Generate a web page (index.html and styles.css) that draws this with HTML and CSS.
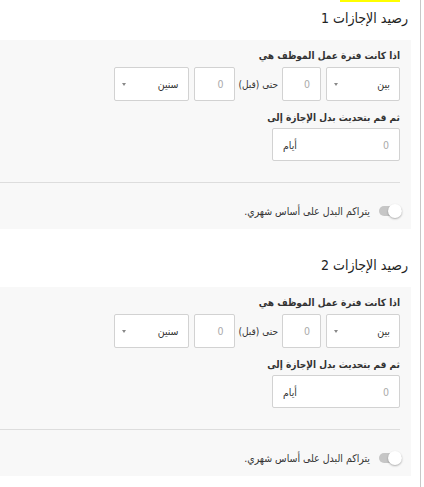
FILE: index.html
```html
<!DOCTYPE html>
<html lang="ar" dir="rtl">
<head>
  <meta charset="UTF-8">
  <meta name="viewport" content="width=device-width, initial-scale=1.0">
  <title>رصيد الإجازات</title>
  <link rel="stylesheet" href="styles.css">
</head>
<body>
  <div class="page">
    <div class="highlight"></div>

    <section class="balance first">
      <h3 class="balance-title">رصيد الإجازات 1</h3>
      <div class="panel">
        <label class="field-label">اذا كانت فترة عمل الموظف هي</label>
        <div class="range-row">
          <div class="select wide"><span>بين</span><i class="caret"></i></div>
          <div class="box num">0</div>
          <span class="range-text">حتى (قبل)</span>
          <div class="box num num-2">0</div>
          <div class="select wide-2"><span>سنين</span><i class="caret"></i></div>
        </div>
        <label class="field-label second">ثم قم بتحديث بدل الإجازة إلى</label>
        <div class="box days"><span class="ph">0</span><span class="unit">أيام</span></div>
        <hr class="divider">
        <div class="toggle-row">
          <span class="toggle"><span class="knob"></span></span>
          <span>يتراكم البدل على أساس شهري.</span>
        </div>
      </div>
    </section>

    <section class="balance">
      <h3 class="balance-title">رصيد الإجازات 2</h3>
      <div class="panel">
        <label class="field-label">اذا كانت فترة عمل الموظف هي</label>
        <div class="range-row">
          <div class="select wide"><span>بين</span><i class="caret"></i></div>
          <div class="box num">0</div>
          <span class="range-text">حتى (قبل)</span>
          <div class="box num num-2">0</div>
          <div class="select wide-2"><span>سنين</span><i class="caret"></i></div>
        </div>
        <label class="field-label second">ثم قم بتحديث بدل الإجازة إلى</label>
        <div class="box days"><span class="ph">0</span><span class="unit">أيام</span></div>
        <hr class="divider">
        <div class="toggle-row">
          <span class="toggle"><span class="knob"></span></span>
          <span>يتراكم البدل على أساس شهري.</span>
        </div>
      </div>
    </section>
  </div>
</body>
</html>
```

FILE: styles.css
```css
body {
  margin: 0;
  padding: 0;
  background: #fff;
  font-family: "DejaVu Sans Condensed", "DejaVu Sans", sans-serif;
  color: #333;
  overflow: hidden;
}
.page {
  width: 421px;
  min-height: 487px;
  margin-left: 0;
  margin-right: auto;
  border-right: 1px solid #c8c8c8;
  box-sizing: border-box;
  padding-right: 9px;
}
.highlight {
  width: 60px;
  height: 2px;
  margin-right: 11px;
  background: #ffff00;
}
.balance {
  padding-top: 26px;
}
.balance.first {
  padding-top: 6px;
}
.balance-title {
  margin: 0 3px 12px 0;
  font-size: 14px;
  font-weight: 400;
  line-height: 20px;
  color: #222;
}
.panel {
  background: #f8f8f8;
  padding: 8px 11px 8px 0;
}
.field-label {
  display: block;
  font-size: 10px;
  font-weight: 600;
  line-height: 16px;
  margin-bottom: 3px;
}
.field-label.second {
  margin-top: 9px;
  margin-bottom: 2px;
}
.range-row {
  display: flex;
  align-items: center;
  gap: 5px;
}
.select, .box {
  height: 34px;
  box-sizing: border-box;
  background: #fff;
  border: 1px solid #d2d2d2;
  border-radius: 2px;
  font-size: 10.5px;
  display: flex;
  align-items: center;
}
.select {
  justify-content: space-between;
  padding: 0 9px 0 7px;
}
.select.wide { width: 74px; }
.select.wide-2 { width: 75px; }
.caret {
  width: 0;
  height: 0;
  border-left: 2.5px solid transparent;
  border-right: 2.5px solid transparent;
  border-top: 3px solid #888;
}
.box.num {
  width: 39px;
  padding-right: 10px;
  color: #aaa;
}
.box.num-2 { width: 41px; }
.range-text {
  font-size: 10px;
  margin: 0 -1px;
}
.box.days {
  width: 128px;
  height: 33px;
  padding: 0 10px;
  justify-content: space-between;
}
.days .ph { color: #aaa; }
.divider {
  border: none;
  border-top: 1px solid #ddd;
  margin: 21px 0 18px;
}
.toggle-row {
  display: flex;
  align-items: center;
  gap: 9px;
  height: 20px;
  font-size: 10.5px;
  margin-right: -2px;
}
.toggle {
  position: relative;
  width: 23px;
  height: 10px;
  border-radius: 5px;
  background: #c6c6c6;
}
.knob {
  position: absolute;
  right: 0;
  top: -2px;
  width: 14px;
  height: 14px;
  border-radius: 50%;
  background: #fff;
  box-shadow: 0 1px 2px rgba(0,0,0,0.3);
}
```
